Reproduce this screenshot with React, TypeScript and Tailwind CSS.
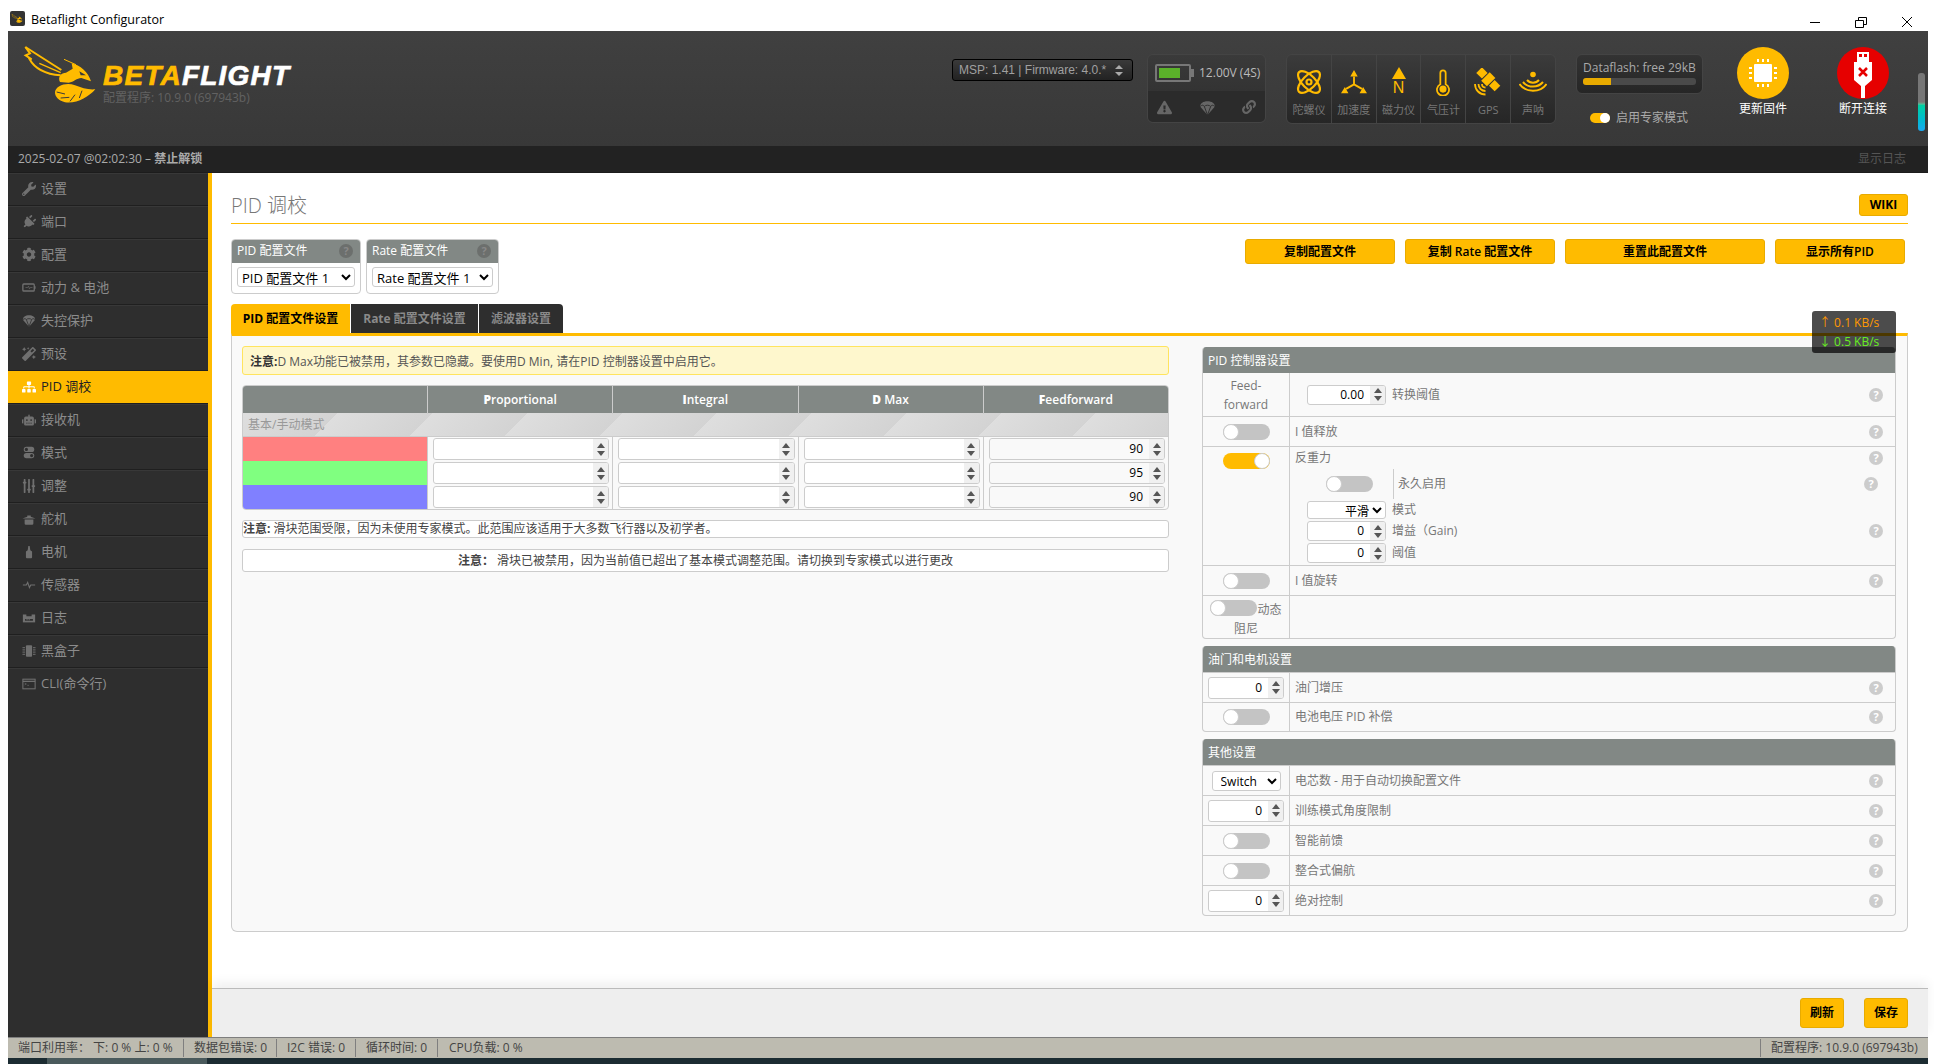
import React from 'react';
import {
  FaWrench, FaPlug, FaCog, FaMagic, FaSitemap, FaRobot, FaSlidersH, FaExclamationTriangle, FaLink,
} from 'react-icons/fa';

// --- Small drawings ---

function Bee({ className }: { className?: string }) {
  return (
    <svg viewBox="0 0 252 198" className={className}>
      <g fill="none" stroke="#ffbb00" strokeWidth="6" strokeLinejoin="miter">
        <path d="M16 15 L124 84" />
        <path d="M16 15 L30 34 L17 40 L35 52 L28 50 C42 76 72 96 122 100" />
        <path d="M58 64 L122 92" strokeWidth="4" />
        <path d="M132 52 L168 68" strokeWidth="3" />
      </g>
      <path d="M155 64 C180 70 205 90 213 118 L184 108 C170 108 162 120 146 122 L120 120 C112 104 124 92 138 92 L158 80 Z" fill="#ffbb00" />
      <path d="M178 88 L198 100 L182 100 Z" fill="#3a3a3a" />
      <path d="M105 150 C108 130 140 120 165 130 C185 138 205 144 226 142 C205 166 170 186 135 181 C118 176 104 165 105 150 Z" fill="#ffbb00" />
      <g fill="none" stroke="#3a3a3a" strokeWidth="3">
        <path d="M110 150 L135 156" />
        <path d="M122 168 L148 166" />
        <path d="M150 178 L165 158" />
        <path d="M178 168 L186 146" />
      </g>
    </svg>
  );
}

function Parachute({ className }: { className?: string }) {
  return (
    <svg viewBox="0 0 16 16" className={className}>
      <path d="M8 2C4 2 1 4 1 7l7 8 7-8c0-3-3-5-7-5z" fill="currentColor" />
      <path d="M1 7c2-1.500 3-1.500 4 0 1-1.500 5-1.500 6 0 1-1.500 2-1.500 4 0M5 7l3 8 3-8" fill="none" stroke="#2e2e2e" strokeWidth="0.9" />
    </svg>
  );
}

const BatteryIcon = ({ className }: { className?: string }) => (
  <svg viewBox="0 0 16 16" className={className}>
    <rect x="1" y="4" width="13" height="8" rx="1" fill="none" stroke="currentColor" strokeWidth="1.500" />
    <rect x="14" y="6.500" width="1.500" height="3" fill="currentColor" />
    <path d="M4 8h2.500l1-1.500 1 3 1-1.500H12" fill="none" stroke="currentColor" strokeWidth="0.7" />
  </svg>
);
const ModesIcon = ({ className }: { className?: string }) => (
  <svg viewBox="0 0 16 16" className={className}>
    <rect x="2" y="1.500" width="12" height="6" rx="3" fill="currentColor" />
    <rect x="2" y="8.500" width="12" height="6" rx="3" fill="currentColor" />
    <circle cx="5" cy="4.500" r="1.800" fill="#2e2e2e" />
    <circle cx="11" cy="11.500" r="1.800" fill="#2e2e2e" />
  </svg>
);
const ServoIcon = ({ className }: { className?: string }) => (
  <svg viewBox="0 0 16 16" className={className}>
    <path d="M0.500 7.500 6 5.500V4h4v1.500l5.500 2zM3 8.500h10V13a1.500 1.500 0 0 1-1.500 1.500h-7A1.500 1.500 0 0 1 3 13z" fill="currentColor" />
  </svg>
);
const MotorIcon = ({ className }: { className?: string }) => (
  <svg viewBox="0 0 16 16" className={className}>
    <path d="M7.200 1h1.600l.7 5 2 1.500V14a1 1 0 0 1-1 1H5.500a1 1 0 0 1-1-1V7.500l2-1.500z" fill="currentColor" />
  </svg>
);
const PulseIcon = ({ className }: { className?: string }) => (
  <svg viewBox="0 0 16 16" className={className}>
    <path d="M1 8h4l1.500-3 2 6 1.500-3h5" fill="none" stroke="currentColor" strokeWidth="1.300" />
  </svg>
);
const LogIcon = ({ className }: { className?: string }) => (
  <svg viewBox="0 0 16 16" className={className}>
    <path d="M1 4h14v9H1z" fill="currentColor" />
    <path d="M5 3h6v3H5zM3.500 9h9v2h-9z" fill="#2e2e2e" />
    <path d="M5 9.500h1.500v1H5zM7.500 9.500H9v1H7.500z" fill="currentColor" />
  </svg>
);
const BlackboxIcon = ({ className }: { className?: string }) => (
  <svg viewBox="0 0 16 16" className={className}>
    <rect x="4.500" y="1.500" width="7" height="13" rx="1" fill="currentColor" />
    <path d="M0.500 4h3M0.500 8h3M0.500 12h3M12.500 4h3M12.500 8h3M12.500 12h3M0.500 6h3M0.500 10h3M12.500 6h3M12.500 10h3" stroke="currentColor" strokeWidth="0.900" />
  </svg>
);
const TerminalIcon = ({ className }: { className?: string }) => (
  <svg viewBox="0 0 16 16" className={className}>
    <rect x="1" y="2.500" width="14" height="11" fill="none" stroke="currentColor" strokeWidth="1.200" />
    <path d="M1 5h14" stroke="currentColor" strokeWidth="1.500" />
    <path d="M3 7l2 1-2 1M6 9.500h2" fill="none" stroke="currentColor" strokeWidth="0.700" />
  </svg>
);

const GyroIcon = () => (
  <svg viewBox="0 0 28 28" className="w-[28px] h-[28px]" fill="none" stroke="#ffbb00" strokeWidth="2.200">
    <ellipse cx="14" cy="14" rx="14" ry="6.500" transform="rotate(45 14 14)" />
    <ellipse cx="14" cy="14" rx="14" ry="6.500" transform="rotate(-45 14 14)" />
    <circle cx="14" cy="14" r="2.500" />
  </svg>
);
const AccelIcon = () => (
  <svg viewBox="0 0 28 28" className="w-[28px] h-[26px]" fill="#ffbb00">
    <path d="M13 8h2v8l8 4.500-1 1.800-8-4.600-8 4.600-1-1.800 8-4.500z" />
    <path d="M14 1l4 7h-8zM28 26l-8 .2 3.800-6.800zM0 26l8 .2-3.800-6.800z" />
  </svg>
);
const MagIcon = () => (
  <div className="flex flex-col items-center">
    <div className="w-0 h-0 border-l-[7px] border-r-[7px] border-b-[12px] border-l-transparent border-r-transparent border-b-[#ffbb00]" />
    <span className="text-[#ffbb00] text-[16px] leading-[16px] mt-[1px] font-['Liberation_Sans',sans-serif]">N</span>
  </div>
);
const BaroIcon = () => (
  <svg viewBox="0 0 18 28" className="w-[16px] h-[28px]" fill="none" stroke="#ffbb00" strokeWidth="2">
    <path d="M6 16.500V4a3 3 0 0 1 6 0v12.500a6.800 6.800 0 1 1-6 0z" />
    <circle cx="9" cy="22" r="4" fill="#ffbb00" stroke="none" />
  </svg>
);
const GpsIcon = () => (
  <svg viewBox="0 0 28 28" className="w-[28px] h-[28px]">
    <g fill="#ffbb00" transform="rotate(45 15 12)">
      <rect x="1" y="8" width="8" height="8" />
      <rect x="10" y="6" width="8" height="12" />
      <rect x="19" y="8" width="8" height="8" />
    </g>
    <g fill="none" stroke="#ffbb00" strokeWidth="1.800">
      <path d="M8 16c0 2 1.500 3.500 3.500 3.500" />
      <path d="M4.500 16c0 4 3 7 7 7" />
      <path d="M1 16c0 6 4.500 10.500 10.500 10.500" />
    </g>
  </svg>
);
const SonarIcon = () => (
  <svg viewBox="0 0 28 22" className="w-[28px] h-[22px]" fill="none" stroke="#ffbb00" strokeWidth="2">
    <circle cx="14" cy="3.500" r="2.800" fill="#ffbb00" stroke="none" />
    <path d="M8 9c3 3.500 9 3.500 12 0" />
    <path d="M4 11c5 6 15 6 20 0" />
    <path d="M0.500 13c6 9 21 9 27 0" />
  </svg>
);

function Spin() {
  return (
    <div className="w-[15px] shrink-0 self-stretch bg-[#f0f0f0] flex flex-col items-center justify-center gap-[3px]">
      <div className="w-0 h-0 border-l-[4px] border-r-[4px] border-b-[5px] border-l-transparent border-r-transparent border-b-[#555]" />
      <div className="w-0 h-0 border-l-[4px] border-r-[4px] border-t-[5px] border-l-transparent border-r-transparent border-t-[#555]" />
    </div>
  );
}

function NumInput({ value, className, bg = 'bg-white' }: { value?: string; className: string; bg?: string }) {
  return (
    <div className={`flex items-center border border-[#ccc] rounded-[3px] overflow-hidden text-[12px] text-black ${bg} ${className}`}>
      <span className="flex-1 text-right pr-[6px]">{value}</span>
      <Spin />
    </div>
  );
}

function Toggle({ on }: { on?: boolean }) {
  return (
    <div className={`w-[47px] h-[16px] shrink-0 rounded-full flex items-center ${on ? 'bg-[#ffbb00] justify-end' : 'bg-[#c4c4c4] justify-start'}`}>
      <div className="w-[16px] h-[16px] rounded-full bg-white border border-[#ccc]" />
    </div>
  );
}

function Help({ className = '' }: { className?: string }) {
  return (
    <span className={`w-[14px] h-[14px] rounded-full bg-[#ccc] text-white text-[11px] leading-[14px] font-bold text-center shrink-0 ${className}`}>?</span>
  );
}

// --- Data ---

const NAV = [
  { label: '设置', icon: <FaWrench size={14} /> },
  { label: '端口', icon: <FaPlug size={14} className="rotate-45" /> },
  { label: '配置', icon: <FaCog size={15} /> },
  { label: '动力 & 电池', icon: <BatteryIcon className="w-[15px] h-[15px]" /> },
  { label: '失控保护', icon: <Parachute className="w-[15px] h-[15px]" /> },
  { label: '预设', icon: <FaMagic size={14} /> },
  { label: 'PID 调校', icon: <FaSitemap size={14} />, active: true },
  { label: '接收机', icon: <FaRobot size={14} /> },
  { label: '模式', icon: <ModesIcon className="w-[15px] h-[15px]" /> },
  { label: '调整', icon: <FaSlidersH size={14} className="rotate-90" /> },
  { label: '舵机', icon: <ServoIcon className="w-[16px] h-[16px]" /> },
  { label: '电机', icon: <MotorIcon className="w-[16px] h-[16px]" /> },
  { label: '传感器', icon: <PulseIcon className="w-[16px] h-[16px]" /> },
  { label: '日志', icon: <LogIcon className="w-[16px] h-[16px]" /> },
  { label: '黑盒子', icon: <BlackboxIcon className="w-[16px] h-[16px]" /> },
  { label: 'CLI(命令行)', icon: <TerminalIcon className="w-[16px] h-[16px]" /> },
];

const SENSORS = [
  { label: '陀螺仪', icon: <GyroIcon /> },
  { label: '加速度', icon: <AccelIcon /> },
  { label: '磁力仪', icon: <MagIcon /> },
  { label: '气压计', icon: <BaroIcon /> },
  { label: 'GPS', icon: <GpsIcon /> },
  { label: '声呐', icon: <SonarIcon /> },
];

const PID_ROWS = [
  { color: 'bg-[#ff8080]', ff: '90', key: 'roll' },
  { color: 'bg-[#80ff80]', ff: '95', key: 'pitch' },
  { color: 'bg-[#8080ff]', ff: '90', key: 'yaw' },
];

// --- Pieces of the page ---

function Row({ left, label, h = 'h-[30px]', help = true }: { left: React.ReactNode; label?: string; h?: string; help?: boolean }) {
  return (
    <div className={`flex border-t border-[#ccc] ${h}`}>
      <div className="w-[87px] shrink-0 border-r border-[#ccc] flex items-center justify-center">{left}</div>
      <div className="flex-1 flex items-center justify-between pl-[5px] pr-[12px] text-[12px] text-[#777]">
        <span>{label}</span>
        {help && <Help />}
      </div>
    </div>
  );
}

function Section({ title, children }: { title: string; children: React.ReactNode }) {
  return (
    <div className="border-x border-b border-[#ccc] rounded-[4px] overflow-hidden mb-[7px]">
      <div className="h-[26px] bg-[#828885] text-white text-[12px] leading-[27px] pl-[5px]">{title}</div>
      {children}
    </div>
  );
}

function Header() {
  return (
    <div className="h-[115px] shrink-0 flex items-start pt-[16px] bg-gradient-to-b from-[#404040] to-[#383838]">
      <div className="w-[944px] shrink-0 flex pl-[12px]">
        <Bee className="w-[84px] h-[66px] -mt-[5px] shrink-0" />
        <div className="ml-[-1px]">
          <div className="text-[28px] leading-[32px] mt-[13px] font-bold italic tracking-[1.200px] font-['Liberation_Sans',sans-serif] [-webkit-text-stroke:0.7px]">
            <span className="text-[#ffbb00]">BETA</span>
            <span className="text-white">FLIGHT</span>
          </div>
          <div className="text-[12px] leading-[16px] -mt-[2px] text-[#626262]">配置程序: 10.9.0 (697943b)</div>
        </div>
      </div>

      <div className="w-[181px] h-[22px] mt-[12px] shrink-0 flex items-center justify-between px-[6px] rounded-[3px] border border-black bg-gradient-to-b from-[#3a3a3a] to-[#222] text-[12px] text-[#a0a0a0] font-['Liberation_Sans',sans-serif]">
        <span>MSP: 1.41 | Firmware: 4.0.*</span>
        <span className="flex flex-col gap-[3px] mr-[3px]">
          <span className="w-0 h-0 border-l-[4px] border-r-[4px] border-b-[4px] border-l-transparent border-r-transparent border-b-[#aaa]" />
          <span className="w-0 h-0 border-l-[4px] border-r-[4px] border-t-[4px] border-l-transparent border-r-transparent border-t-[#aaa]" />
        </span>
      </div>

      <div className="w-[119px] h-[69px] mt-[7px] ml-[14px] shrink-0 rounded-[6px] border border-[#444] overflow-hidden">
        <div className="h-[36px] bg-gradient-to-b from-[#3a3a3a] to-[#333] flex items-center pl-[7px]">
          <div className="w-[36px] h-[18px] border-2 border-[#777] rounded-[2px] p-[2px]">
            <div className="w-[21px] h-full bg-[#5bb12a]" />
          </div>
          <div className="w-[3px] h-[8px] bg-[#777]" />
          <span className="ml-[5px] text-[12px] text-[#bbb] whitespace-nowrap">12.00V (4S)</span>
        </div>
        <div className="h-[32px] bg-[#2b2b2b] flex items-center justify-between px-[9px] text-[#666]">
          <FaExclamationTriangle size={15} />
          <Parachute className="w-[17px] h-[17px]" />
          <FaLink size={14} />
        </div>
      </div>

      <div className="w-[270px] h-[70px] mt-[7px] ml-[20px] shrink-0 rounded-[6px] border border-[#444] overflow-hidden flex">
        {SENSORS.map((s) => (
          <div key={s.label} className="flex-1 border-r border-[#444] last:border-r-0 bg-gradient-to-b from-[#3b3b3b] to-[#262626] flex flex-col items-center">
            <div className="h-[41px] mt-[6px] flex items-center justify-center">{s.icon}</div>
            <span className="text-[11px] leading-[14px] mt-[1px] text-[#777] whitespace-nowrap">{s.label}</span>
          </div>
        ))}
      </div>

      <div className="w-[127px] mt-[7px] ml-[20px] shrink-0">
        <div className="h-[40px] rounded-[6px] border border-[#444] bg-gradient-to-b from-[#333] to-[#262626] px-[6px]">
          <div className="text-[12px] leading-[16px] mt-[5px] text-[#aaa] whitespace-nowrap">Dataflash: free 29kB</div>
          <div className="h-[7px] mt-[2px] rounded-[3px] bg-[#4a4a4a] overflow-hidden">
            <div className="w-[25%] h-full bg-[#e8aa00]" />
          </div>
        </div>
        <div className="flex items-center mt-[15px] pl-[14px]">
          <div className="w-[20px] h-[10px] rounded-full bg-[#ffbb00] flex justify-end">
            <div className="w-[10px] h-[10px] rounded-full bg-white" />
          </div>
          <span className="ml-[6px] text-[12px] text-[#aaa] whitespace-nowrap">启用专家模式</span>
        </div>
      </div>

      <div className="w-[60px] ml-[30px] shrink-0 flex flex-col items-center">
        <div className="w-[52px] h-[52px] rounded-full bg-[#ffbb00] flex items-center justify-center">
          <svg viewBox="0 0 28 28" className="w-[28px] h-[28px]" fill="white">
            <rect x="5" y="5" width="18" height="18" rx="1" />
            <path d="M8 0h2v3H8zM13 0h2v3h-2zM18 0h2v3h-2zM8 25h2v3H8zM13 25h2v3h-2zM18 25h2v3h-2zM0 8h3v2H0zM0 13h3v2H0zM0 18h3v2H0zM25 8h3v2h-3zM25 13h3v2h-3zM25 18h3v2h-3z" />
          </svg>
        </div>
        <span className="text-[12px] leading-[16px] mt-[2px] text-white whitespace-nowrap">更新固件</span>
      </div>

      <div className="w-[60px] ml-[40px] shrink-0 flex flex-col items-center">
        <div className="w-[52px] h-[52px] rounded-full bg-[#e60000] flex items-center justify-center">
          <svg viewBox="0 0 20 50" className="w-[20px] h-[50px]" fill="white">
            <path d="M4 4h12v10h-12zM6 6v3h3V6zM11 6v3h3V6z" fillRule="evenodd" />
            <path d="M1 14h18v18l-7 6v12H8V38l-7-6z" />
            <path d="M6 20l8 8M14 20l-8 8" stroke="#e60000" strokeWidth="2.500" />
          </svg>
        </div>
        <span className="text-[12px] leading-[16px] mt-[2px] text-white whitespace-nowrap">断开连接</span>
      </div>

      <div className="w-[7px] h-[58px] mt-[26px] ml-[25px] shrink-0 rounded-[3px] bg-gradient-to-b from-[#777] from-[50%] via-[#00d0a0] via-[55%] to-[#1aa8f0]" />
    </div>
  );
}

function Sidebar() {
  return (
    <div className="w-[204px] shrink-0 bg-[#2e2e2e] border-r-4 border-[#ffbb00]">
      {NAV.map((n) => (
        <div
          key={n.label}
          className={`h-[33px] flex items-center pl-[14px] pb-[1px] text-[13px] border-b border-[#1f1f1f] last:border-b-0 ${n.active ? 'bg-[#ffbb00] text-[#222]' : 'text-[#8c8c8c] shadow-[inset_0_1px_0_#383838]'}`}
        >
          <span className={`w-[14px] mr-[5px] flex items-center justify-center ${n.active ? 'text-white' : 'text-[#707070]'}`}>{n.icon}</span>
          <span>{n.label}</span>
        </div>
      ))}
    </div>
  );
}

function ProfileBox({ title, value, w }: { title: string; value: string; w: string }) {
  return (
    <div className={`${w} h-[55px] border border-[#ccc] rounded-[4px] overflow-hidden`}>
      <div className="h-[23px] bg-[#828885] flex items-center justify-between pl-[5px] pr-[7px] pb-[1px] text-[12px] text-white">
        <span>{title}</span>
        <span className="w-[14px] h-[14px] rounded-full bg-[#6c6f6d] text-[#888] text-[11px] leading-[14px] font-bold text-center">?</span>
      </div>
      <div className="px-[5px] pt-[4px]">
        <select defaultValue={value} className="block w-full h-[20px] border border-[#ccc] rounded-[3px] bg-white text-[13px] text-black">
          <option>{value}</option>
        </select>
      </div>
    </div>
  );
}

function PidTable() {
  const heads: [string, string][] = [['P', 'roportional'], ['I', 'ntegral'], ['D', ' Max'], ['F', 'eedforward']];
  return (
    <div className="border border-[#ccc] rounded-[4px] overflow-hidden mt-[10px] bg-[#f9f9f9]">
      <div className="grid grid-cols-[184px_repeat(4,1fr)] h-[27px] bg-[#828885] text-white text-[12px] font-semibold leading-[28px] text-center">
        <div />
        {heads.map(([a, b]) => (
          <div key={a} className="border-l border-[#ccc]"><b>{a}</b>{b}</div>
        ))}
      </div>
      <div className="h-[24px] border-b border-[#ccc] text-[12px] leading-[24px] text-[#999] pl-[5px] bg-[repeating-linear-gradient(135deg,#dedede_0px,#d3d3d3_67px)]">基本/手动模式</div>
      {PID_ROWS.map((r) => (
        <div key={r.key} className="grid grid-cols-[184px_repeat(4,1fr)] h-[24px]">
          <div className={r.color} />
          {[0, 1, 2].map((i) => (
            <div key={i} className="border-l border-[#ccc] pl-[5px] pr-[3px] pt-[1px]">
              <NumInput className="h-[22px] w-full" />
            </div>
          ))}
          <div className="border-l border-[#ccc] pl-[5px] pr-[3px] pt-[1px]">
            <NumInput value={r.ff} bg="bg-[#f9f9f9]" className="h-[22px] w-full" />
          </div>
        </div>
      ))}
    </div>
  );
}

function AntiGravityRow() {
  return (
    <div className="flex border-t border-[#ccc] h-[119px]">
      <div className="w-[87px] shrink-0 border-r border-[#ccc] flex justify-center pt-[6px]"><Toggle on /></div>
      <div className="flex-1 text-[12px] text-[#777]">
        <div className="h-[22px] flex items-center justify-between pl-[5px] pr-[12px]">
          <span>反重力</span>
          <Help />
        </div>
        <div className="h-[30px] flex items-center pl-[36px]">
          <Toggle />
          <div className="h-full border-l border-[#ccc] ml-[20px] pl-[4px] flex items-center">永久启用</div>
          <Help className="ml-auto mr-[17px]" />
        </div>
        <div className="pl-[17px] pr-[12px] mt-[2px] flex flex-col gap-[2px]">
          <div className="flex items-center h-[18px]">
            <select className="w-[79px] h-[18px] border border-[#ccc] rounded-[3px] bg-white text-[12px] text-black [text-align-last:right]">
              <option>平滑</option>
            </select>
            <span className="ml-[6px]">模式</span>
          </div>
          <div className="flex items-center h-[20px]">
            <NumInput value="0" className="w-[79px] h-[20px]" />
            <span className="ml-[6px]">增益（Gain)</span>
            <Help className="ml-auto" />
          </div>
          <div className="flex items-center h-[20px]">
            <NumInput value="0" className="w-[79px] h-[20px]" />
            <span className="ml-[6px]">阈值</span>
          </div>
        </div>
      </div>
    </div>
  );
}

function RightColumn() {
  return (
    <div className="w-[694px] shrink-0 mt-[1px]">
      <Section title="PID 控制器设置">
        <div className="flex h-[43px]">
          <div className="w-[87px] shrink-0 border-r border-[#ccc] text-center text-[12px] leading-[19px] text-[#777] pt-[3px] px-[20px]">Feed-forward</div>
          <div className="flex-1 flex items-center pl-[17px] pr-[12px] text-[12px] text-[#777]">
            <NumInput value="0.00" className="w-[79px] h-[20px]" />
            <span className="ml-[6px]">转换阈值</span>
            <Help className="ml-auto" />
          </div>
        </div>
        <Row left={<Toggle />} label="I 值释放" />
        <AntiGravityRow />
        <Row left={<Toggle />} label="I 值旋转" />
        <div className="flex border-t border-[#ccc] h-[43px]">
          <div className="w-[87px] shrink-0 border-r border-[#ccc] text-center text-[12px] leading-[19px] text-[#777] pt-[4px]">
            <div className="flex justify-center">
              <Toggle />
              <span>动态</span>
            </div>
            <div>阻尼</div>
          </div>
        </div>
      </Section>
      <Section title="油门和电机设置">
        <Row left={<NumInput value="0" className="w-[76px] h-[22px]" />} label="油门增压" />
        <Row left={<Toggle />} label="电池电压 PID 补偿" h="h-[29px]" />
      </Section>
      <Section title="其他设置">
        <Row
          left={
            <select className="w-[69px] h-[20px] border border-[#ccc] rounded-[3px] bg-white text-[12px] text-black pl-[4px]">
              <option>Switch</option>
            </select>
          }
          label="电芯数 - 用于自动切换配置文件"
        />
        <Row left={<NumInput value="0" className="w-[76px] h-[22px]" />} label="训练模式角度限制" />
        <Row left={<Toggle />} label="智能前馈" />
        <Row left={<Toggle />} label="整合式偏航" />
        <Row left={<NumInput value="0" className="w-[76px] h-[22px]" />} label="绝对控制" />
      </Section>
    </div>
  );
}

function TopButton({ label, w }: { label: string; w: string }) {
  return (
    <button className={`${w} h-[25px] rounded-[3px] border border-[#e8ab00] bg-[#ffbb00] text-[12px] font-semibold text-black`}>{label}</button>
  );
}

function Content() {
  return (
    <div className="relative flex-1 min-w-0 bg-white flex flex-col">
      <div className="flex-1 pl-[19px] pr-[20px] pt-[21px] bg-white">
        <div className="h-[30px] flex items-start justify-between border-b border-[#ffbb00]">
          <span className="text-[20px] leading-[24px] text-[#777] font-light">PID 调校</span>
          <button className="w-[49px] h-[22px] rounded-[3px] border border-[#e8ab00] bg-[#ffbb00] text-[12px] font-bold text-black">WIKI</button>
        </div>

        <div className="flex items-start mt-[15px]">
          <ProfileBox title="PID 配置文件" value="PID 配置文件 1" w="w-[130px]" />
          <div className="w-[5px]" />
          <ProfileBox title="Rate 配置文件" value="Rate 配置文件 1" w="w-[133px]" />
          <div className="ml-auto mr-[3px] flex gap-[10px]">
            <TopButton label="复制配置文件" w="w-[150px]" />
            <TopButton label="复制 Rate 配置文件" w="w-[150px]" />
            <TopButton label="重置此配置文件" w="w-[200px]" />
            <TopButton label="显示所有PID" w="w-[130px]" />
          </div>
        </div>

        <div className="flex gap-[1px] mt-[10px] h-[29px] text-[12px] font-bold">
          <div className="w-[119px] rounded-tl-[4px] bg-[#ffbb00] text-black flex items-center justify-center">PID 配置文件设置</div>
          <div className="w-[127px] bg-[#2e2e2e] text-[#8a8a8a] flex items-center justify-center">Rate 配置文件设置</div>
          <div className="w-[84px] rounded-tr-[4px] bg-[#2e2e2e] text-[#8a8a8a] flex items-center justify-center">滤波器设置</div>
        </div>

        <div className="h-[599px] border-t-[3px] border-t-[#ffbb00] border-x border-b border-x-[#ccc] border-b-[#ccc] rounded-b-[6px] bg-[#f9f9f9] flex justify-between pl-[10px] pr-[11px] pt-[10px]">
          <div className="w-[927px] shrink-0">
            <div className="h-[29px] border border-[#ffe45e] rounded-[3px] bg-[#fef7cd] text-[12px] leading-[29px] pl-[7px] text-[#555]">
              <b className="text-[#333]">注意:</b>D Max功能已被禁用，其参数已隐藏。要使用D Min, 请在PID 控制器设置中启用它。
            </div>
            <PidTable />
            <div className="h-[18px] mt-[10px] border border-[#ccc] rounded-[3px] bg-white text-[12px] leading-[16px] text-[#444]">
              <b>注意:</b> 滑块范围受限，因为未使用专家模式。此范围应该适用于大多数飞行器以及初学者。
            </div>
            <div className="h-[23px] mt-[11px] border border-[#ccc] rounded-[3px] bg-white text-[12px] leading-[21px] text-[#444] text-center">
              <b>注意：</b>&nbsp;滑块已被禁用，因为当前值已超出了基本模式调整范围。请切换到专家模式以进行更改
            </div>
          </div>
          <RightColumn />
        </div>
      </div>

      <div className="h-[49px] shrink-0 border-t border-[#bbb] bg-[#eee] flex justify-end items-start gap-[20px] pt-[9px] pr-[20px] shadow-[0_-6px_10px_rgba(0,0,0,0.06)]">
        <button className="w-[44px] h-[30px] rounded-[3px] border border-[#e8ab00] bg-[#ffbb00] text-[12px] font-semibold text-black">刷新</button>
        <button className="w-[44px] h-[30px] rounded-[3px] border border-[#e8ab00] bg-[#ffbb00] text-[12px] font-semibold text-black">保存</button>
      </div>

      {/* data rate tooltip lies over the tab line */}
      <div className="absolute left-[1600px] top-[138px] w-[84px] h-[42px] rounded-[3px] bg-black/70 text-[12px] pl-[7px] leading-[19px] pt-[2px]">
        <div className="text-[#ff9900]">↑ 0.1 KB/s</div>
        <div className="text-[#66ee22]">↓ 0.5 KB/s</div>
      </div>
    </div>
  );
}

export default function App() {
  return (
    <div className="w-[1934px] h-[1064px] overflow-hidden bg-white flex flex-col font-['Open_Sans','Noto_Sans_CJK_SC',sans-serif]">
      {/* window title bar */}
      <div className="h-[31px] shrink-0 flex items-start pl-[10px] text-[12.500px] text-black">
        <div className="w-[15px] h-[15px] mt-[11px] rounded-[2px] bg-[#333] flex items-center justify-center mr-[6px]">
          <Bee className="w-[13px] h-[11px]" />
        </div>
        <span className="mt-[11px] leading-[18px]">Betaflight Configurator</span>
        <div className="ml-auto flex items-center">
          <svg viewBox="0 0 46 31" className="w-[46px] h-[31px]" fill="none" stroke="black">
            <path d="M18 22.500h10" />
          </svg>
          <svg viewBox="0 0 46 31" className="w-[46px] h-[31px]" fill="none" stroke="black">
            <path d="M17.500 20.500h8v7h-8zM20.500 20.500v-3h8v7h-3" />
          </svg>
          <svg viewBox="0 0 46 31" className="w-[46px] h-[31px] mr-[4px]" fill="none" stroke="black">
            <path d="M18 17l10 10M28 17l-10 10" />
          </svg>
        </div>
      </div>

      {/* app frame */}
      <div className="flex-1 min-h-0 mx-[8px] mr-[6px] flex flex-col">
        <Header />
        <div className="h-[27px] shrink-0 bg-[#222] border-b border-[#1c1c1c] flex items-center justify-between pl-[10px] pr-[22px] text-[12px]">
          <span className="text-[#aaa]">2025-02-07 @02:02:30 – <b>禁止解锁</b></span>
          <span className="text-[#555]">显示日志</span>
        </div>
        <div className="flex-1 min-h-0 flex">
          <Sidebar />
          <Content />
        </div>
        <div className="h-[21px] shrink-0 bg-[#bdbbb0] border-t border-[#7f7f7f] flex items-center text-[12px] text-[#444]">
          <div className="w-[176px] pl-[10px] border-r border-[#7f7f7f] whitespace-nowrap">端口利用率： 下: 0 % 上: 0 %</div>
          <div className="w-[93px] pl-[10px] border-r border-[#7f7f7f] whitespace-nowrap">数据包错误: 0</div>
          <div className="w-[79px] pl-[10px] border-r border-[#7f7f7f] whitespace-nowrap">I2C 错误: 0</div>
          <div className="w-[82px] pl-[10px] border-r border-[#7f7f7f] whitespace-nowrap">循环时间: 0</div>
          <div className="pl-[11px] whitespace-nowrap">CPU负载: 0 %</div>
          <div className="ml-auto w-[168px] pl-[10px] border-l border-[#7f7f7f] whitespace-nowrap">配置程序: 10.9.0 (697943b)</div>
        </div>
      </div>
      <div className="h-[6px] shrink-0 mx-[8px] mr-[6px] bg-[#1c2c32] flex">
        <div className="ml-[39px] w-[160px] bg-[#4a5a5c]" />
      </div>
    </div>
  );
}
